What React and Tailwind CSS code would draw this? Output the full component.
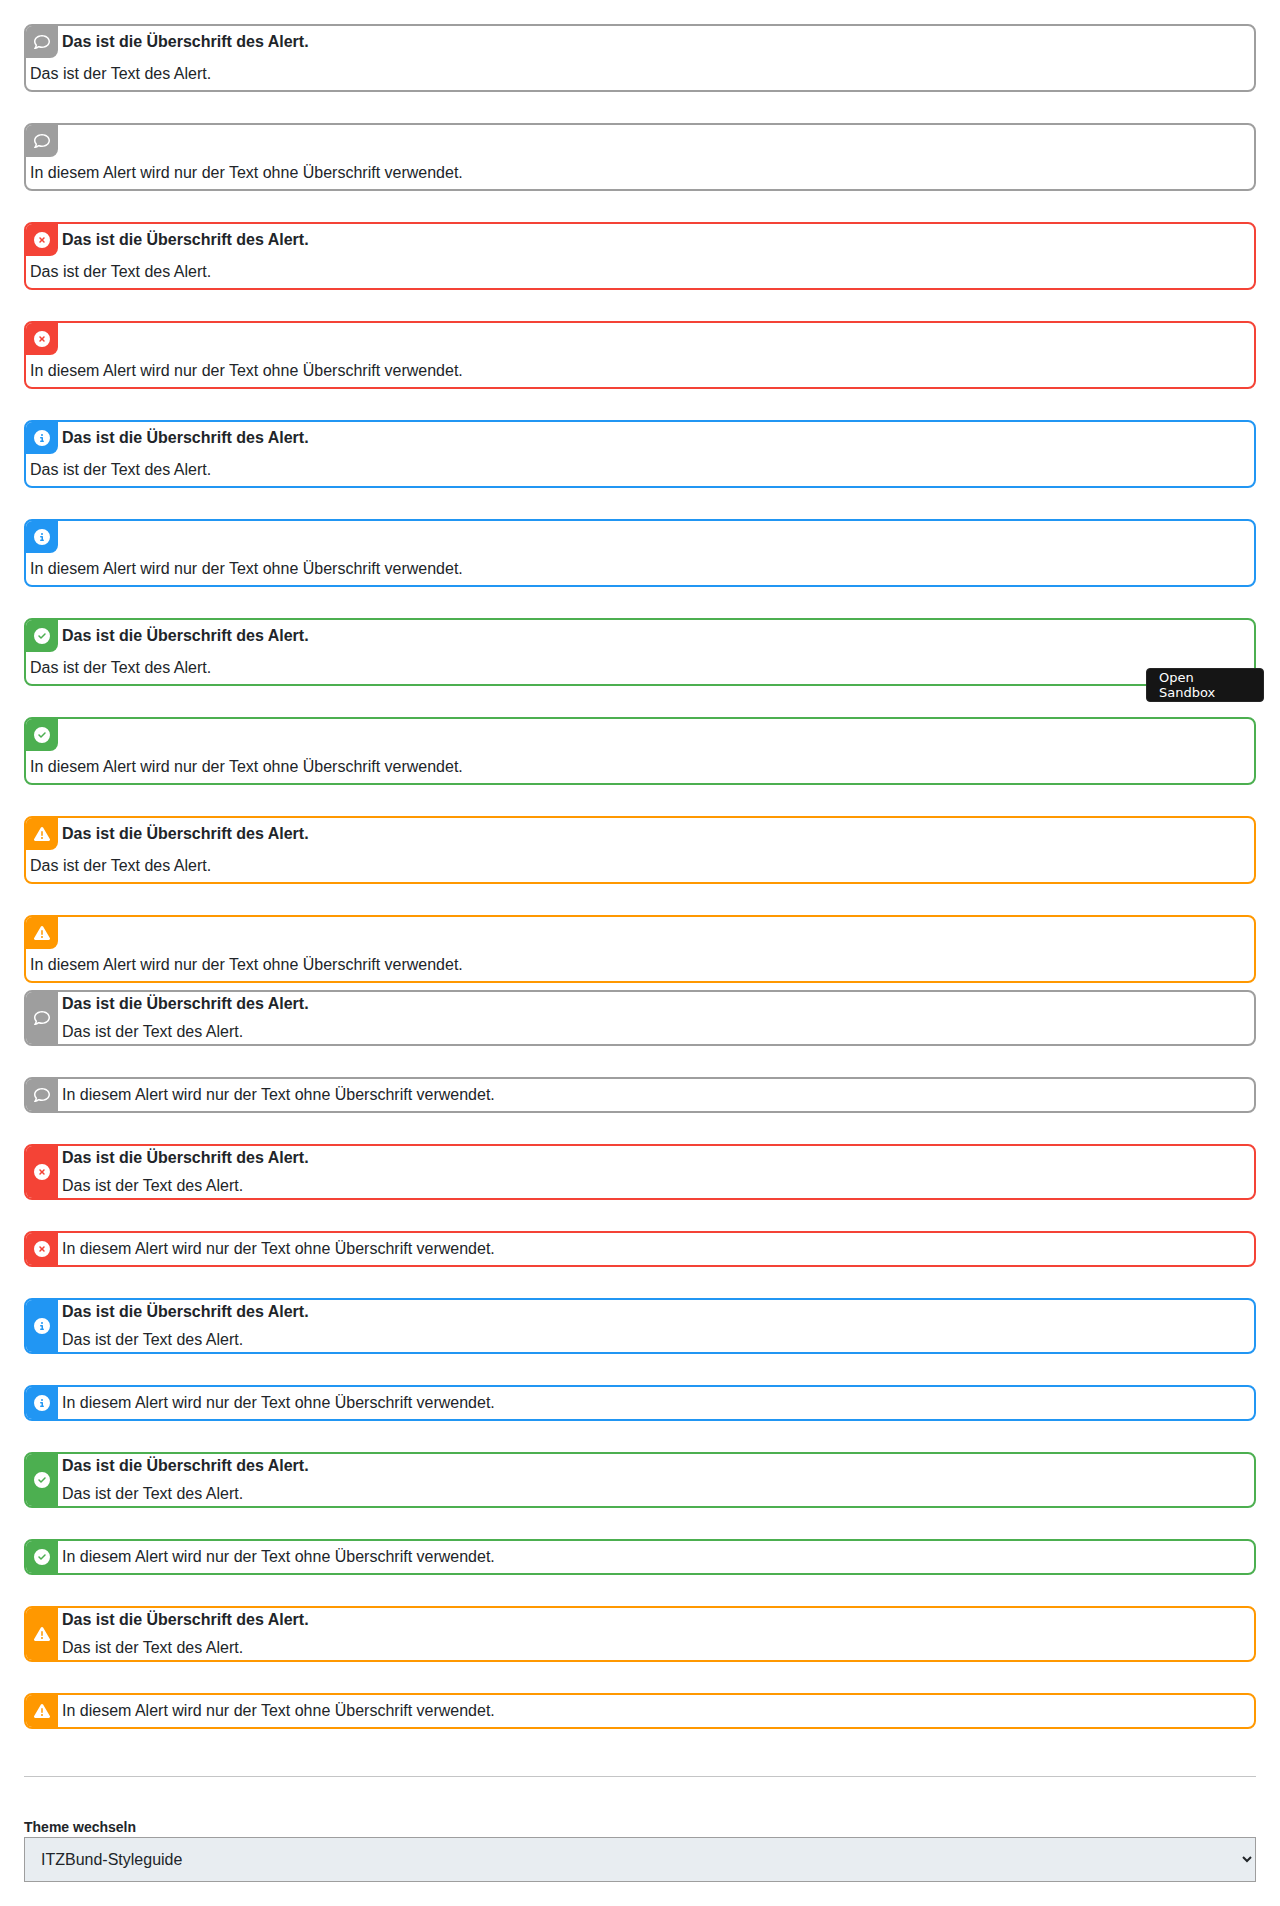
import {
  FaRegComment,
  FaCircleXmark,
  FaCircleInfo,
  FaCircleCheck,
  FaTriangleExclamation,
} from "react-icons/fa6";

const VARIANTS = [
  { id: "default", border: "border-[#9e9e9e]", bg: "bg-[#9e9e9e]", Icon: FaRegComment },
  { id: "error", border: "border-[#f44336]", bg: "bg-[#f44336]", Icon: FaCircleXmark },
  { id: "info", border: "border-[#2196f3]", bg: "bg-[#2196f3]", Icon: FaCircleInfo },
  { id: "success", border: "border-[#4caf50]", bg: "bg-[#4caf50]", Icon: FaCircleCheck },
  { id: "warning", border: "border-[#ff9800]", bg: "bg-[#ff9800]", Icon: FaTriangleExclamation },
];

const HEADING = "Das ist die Überschrift des Alert.";
const TEXT = "Das ist der Text des Alert.";
const TEXT_ONLY = "In diesem Alert wird nur der Text ohne Überschrift verwendet.";

function StackedAlert({ variant, heading, text }) {
  const { Icon, border, bg } = variant;
  return (
    <div className={`rounded-lg border-2 ${border}`}>
      <div className="flex h-8">
        <div className={`flex size-8 items-center justify-center rounded-tl-md rounded-br-lg text-white ${bg}`}>
          <Icon size={16} />
        </div>
        {heading && <strong className="p-1 font-bold">{heading}</strong>}
      </div>
      <div className="p-1">{text}</div>
    </div>
  );
}

function InlineAlert({ variant, heading, text }) {
  const { Icon, border, bg } = variant;
  return (
    <div className={`flex rounded-lg border-2 ${border}`}>
      <div className={`flex w-8 items-center justify-center rounded-l-md text-white ${bg}`}>
        <Icon size={16} />
      </div>
      {heading ? (
        <div className="flex flex-col gap-1 px-1">
          <strong className="font-bold">{heading}</strong>
          <div>{text}</div>
        </div>
      ) : (
        <div className="p-1">{text}</div>
      )}
    </div>
  );
}

function AlertList({ Alert }) {
  return (
    <div className="flex flex-col gap-[31px]">
      {VARIANTS.flatMap((v) => [
        <Alert key={v.id + "-heading"} variant={v} heading={HEADING} text={TEXT} />,
        <Alert key={v.id + "-text"} variant={v} text={TEXT_ONLY} />,
      ])}
    </div>
  );
}

export default function App() {
  return (
    <div className="relative bg-white p-6 font-['Liberation_Sans',Arial,sans-serif] text-base leading-6 text-[#212529]">
      <AlertList Alert={StackedAlert} />
      <div className="mt-[7px]">
        <AlertList Alert={InlineAlert} />
      </div>
      <hr className="mt-[47px] border-t border-[#c4c5c6]" />
      <div className="mt-10">
        <label htmlFor="theme" className="block h-5 text-sm leading-5 font-bold">
          Theme wechseln
        </label>
        <select
          id="theme"
          className="block h-[45px] w-full border border-[#9e9e9e] bg-[#e8edf1] px-3 text-base text-[#212529]"
        >
          <option>ITZBund-Styleguide</option>
        </select>
      </div>
      <button className="absolute top-[668px] right-4 h-[34px] w-[118px] rounded-sm border border-[#252525] bg-[#151515] pl-3 pr-8 text-left font-['DejaVu_Sans',sans-serif] text-[13px] leading-[15px] text-white">
        Open Sandbox
      </button>
    </div>
  );
}
